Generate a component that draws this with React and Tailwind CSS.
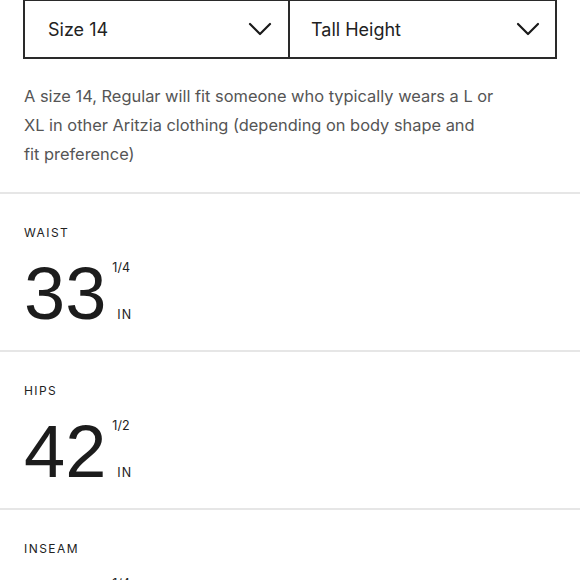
import React from 'react';

const Chevron = () => (
    <svg width="24" height="14" viewBox="0 0 24 14" fill="none" stroke="#1a1a1a" strokeWidth="2.2" strokeLinecap="round" strokeLinejoin="round">
        <path d="M2 2l10 10L22 2" />
    </svg>
);

const Measure = ({ label, value, fraction }) => (
    <div className="border-t-2 border-[#e6e6e6] pl-6 pt-[31px] h-[158px]">
        <div className="text-[12px] leading-4 tracking-[0.12em] text-[#222]">{label}</div>
        <div className="mt-[16px] flex items-start">
            <div className="font-['Liberation_Sans',sans-serif] text-[74px] leading-[74px] text-[#1c1c1c]">{value}</div>
            <div className="ml-[6px] flex flex-col justify-between h-[66px] pt-[3px] text-[12.5px] leading-4 text-[#222]">
                <span>{fraction}</span>
                <span className="pl-[5px] tracking-[0.08em]">IN</span>
            </div>
        </div>
    </div>
);

export default function App() {
    return (
        <div className="w-[580px] h-[580px] overflow-hidden bg-white font-['Inter',sans-serif]">
            <div className="px-[23px]">
                <div className="grid grid-cols-2 h-[60px] -mt-px border-2 border-[#2a2a2a]">
                    <div className="flex items-center justify-between pl-[23px] pr-[16px] border-r-2 border-[#2a2a2a]">
                        <span className="text-[18px] text-[#222]">Size 14</span>
                        <Chevron />
                    </div>
                    <div className="flex items-center justify-between pl-[21px] pr-[15px]">
                        <span className="text-[18px] text-[#222]">Tall Height</span>
                        <Chevron />
                    </div>
                </div>
            </div>
            <p className="mt-[23px] mb-[23px] px-6 whitespace-nowrap text-[16.4px] leading-[29px] text-[#555]">
                A size 14, Regular will fit someone who typically wears a L or
                <br />
                XL in other Aritzia clothing (depending on body shape and
                <br />
                fit preference)
            </p>
            <Measure label="WAIST" value="33" fraction="1/4" />
            <Measure label="HIPS" value="42" fraction="1/2" />
            <Measure label="INSEAM" value="34" fraction="1/4" />
        </div>
    );
}
